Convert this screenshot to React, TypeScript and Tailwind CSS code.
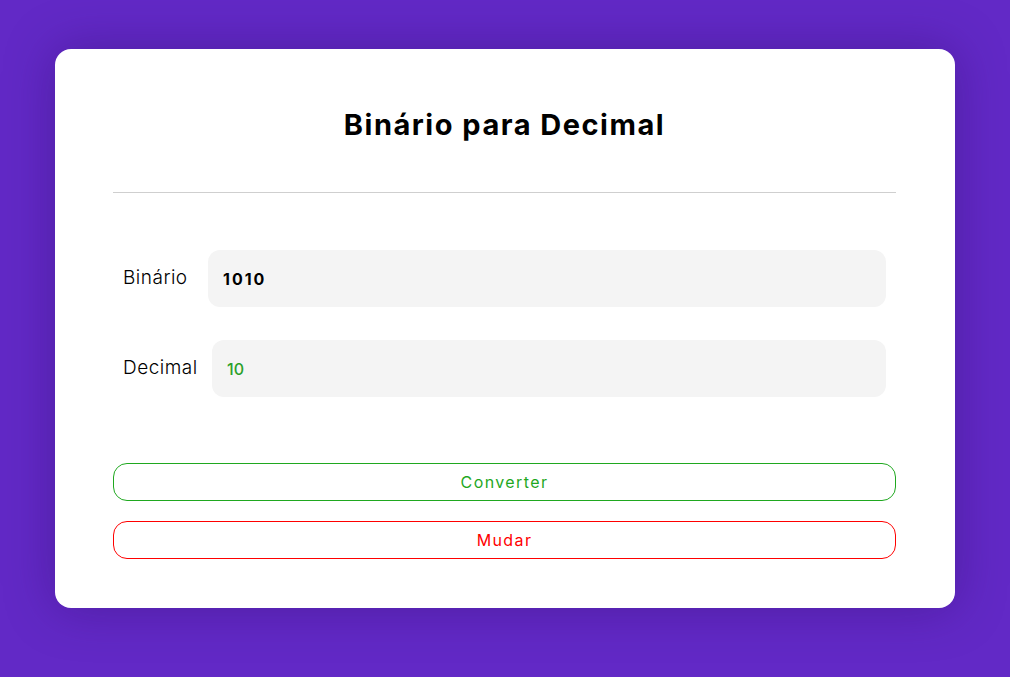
import React, { useState } from "react";

const font = { fontFamily: "Inter, 'Noto Sans', sans-serif" };

const App: React.FC = () => {
  const [binario, setBinario] = useState("1010");
  const [decimal, setDecimal] = useState("10");
  const [modo, setModo] = useState<"bin" | "dec">("bin");

  const converter = () => {
    if (modo === "bin") setDecimal(String(parseInt(binario || "0", 2)));
    else setBinario(Number(decimal || 0).toString(2));
  };

  return (
    <div
      className="min-h-screen w-full bg-[#6229c6] flex justify-center pt-[49px]"
      style={font}
    >
      <div className="w-[900px] h-[559px] bg-white rounded-[16px] shadow-[0_0_50px_rgba(40,10,90,0.35)] pl-[58px] pr-[59px] pt-[55px]">
        <h1 className="text-center text-[29px] leading-[42px] font-bold tracking-[1.5px] text-black">
          {modo === "bin" ? "Binário para Decimal" : "Decimal para Binário"}
        </h1>
        <div className="mt-[46px] h-px bg-[#cfcfcf]" />

        <div className="mt-[57px] flex flex-col gap-[33px] px-[10px]">
          <div className="flex items-center h-[57px]">
            <label className="text-[19px] font-light tracking-[0.5px] text-black w-[85px]">Binário</label>
            <input
              value={binario}
              onChange={(e) => setBinario(e.target.value)}
              className="flex-1 h-[57px] rounded-[12px] bg-[#f4f4f4] px-[15px] text-[16px] font-bold tracking-[2px] text-black outline-none"
            />
          </div>
          <div className="flex items-center h-[57px]">
            <label className="text-[19px] font-light tracking-[0.5px] text-black w-[89px]">Decimal</label>
            <input
              value={decimal}
              onChange={(e) => setDecimal(e.target.value)}
              className="flex-1 h-[57px] rounded-[12px] bg-[#f4f4f4] px-[15px] text-[16px] font-medium text-[#2aa02a] outline-none"
            />
          </div>
        </div>

        <div className="mt-[66px] flex flex-col gap-[20px]">
          <button
            onClick={converter}
            className="h-[38px] w-full rounded-[14px] border border-[#1fa81f] bg-white text-[16px] tracking-[1.4px] text-[#1fa81f]"
          >
            Converter
          </button>
          <button
            onClick={() => setModo(modo === "bin" ? "dec" : "bin")}
            className="h-[38px] w-full rounded-[14px] border border-[#ff0000] bg-white text-[16px] tracking-[1.4px] text-[#ff0000]"
          >
            Mudar
          </button>
        </div>
      </div>
    </div>
  );
};

export default App;
